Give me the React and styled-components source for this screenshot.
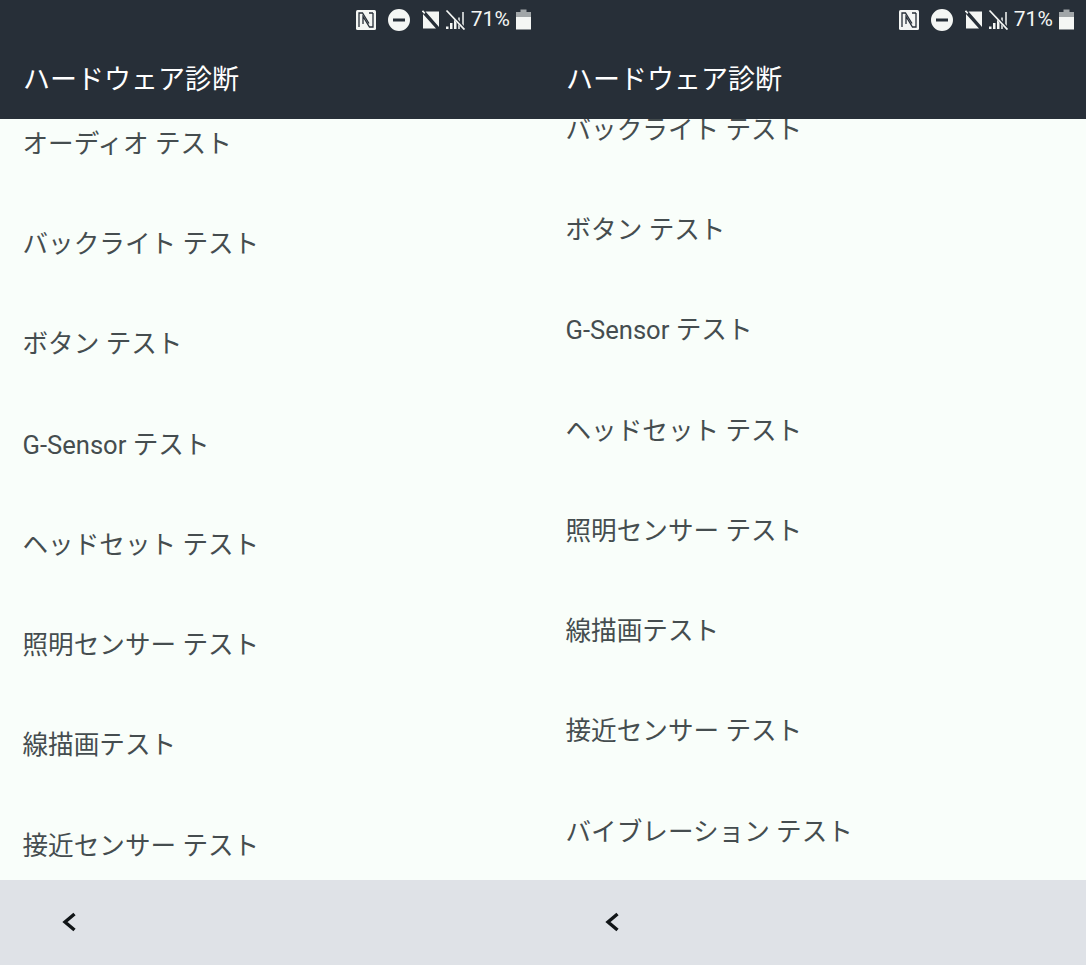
import styled, { createGlobalStyle } from 'styled-components';

const GlobalStyle = createGlobalStyle`
    html, body {
        margin: 0;
        padding: 0;
        background: #f9fefa;
    }
    body {
        font-family: Roboto, "Noto Sans CJK JP", sans-serif;
    }
`
const Page = styled.div`
    width: 1086px;
    height: 965px;
    display: grid;
    grid-template-columns: 543px 543px;
    overflow: hidden;
`
const Phone = styled.div`
    height: 965px;
    display: flex;
    flex-direction: column;
    background: #f9fefa;
`
const Header = styled.header`
    height: 119px;
    flex: none;
    background: #272f38;
    color: #fff;
    position: relative;
    z-index: 1;
`
const StatusBar = styled.div`
    height: 39px;
    padding-right: 12px;
    display: flex;
    align-items: center;
    justify-content: flex-end;
    color: #f4f6f4;
`
const Percent = styled.span`
    font-size: 21px;
    line-height: 1;
    margin: 0 6px 0 4px;
    letter-spacing: 0.1px;
`
const Title = styled.h1`
    margin: 0;
    padding-left: 23px;
    font-size: 27px;
    font-weight: 400;
    line-height: 82px;
`
const List = styled.div`
    flex: 1;
    min-height: 0;
    overflow: hidden;
`
const Rows = styled.div`
    margin-top: ${props => props.$offset}px;
`
const Row = styled.div`
    height: 100.3px;
    padding-left: 22.5px;
    display: flex;
    align-items: center;
    font-size: 25.6px;
    color: #454d4f;
`
const BottomBar = styled.nav`
    height: 85px;
    flex: none;
    box-sizing: border-box;
    background: #dfe2e7;
    padding: 0 0 1px 61px;
    display: flex;
    align-items: center;
    position: relative;
    z-index: 1;
`
const Icon = styled.svg`
    display: block;
    flex: none;
    margin-right: ${props => props.$gap || 0}px;
`

function NfcIcon() {
    return (
        <Icon $gap={12} width="20" height="20" viewBox="0 0 20 20">
            <rect width="20" height="20" rx="1.5" fill="currentColor" />
            <path fill="none" stroke="#272f38" strokeWidth="1.300" d="M3 17V3H6.500L13 13.500M17 3V17H13.500L7 6.500V14M13 3H17" />
        </Icon>
    );
}

function DndIcon() {
    return (
        <Icon $gap={12} width="22" height="22" viewBox="0 0 22 22">
            <path fill="currentColor" fillRule="evenodd" d="M11 0a11 11 0 1 0 0 22 11 11 0 0 0 0-22zM5 9.500h12v3H5z" />
        </Icon>
    );
}

function NoSimIcon() {
    return (
        <Icon $gap={4} width="18" height="20" viewBox="0 0 18 20">
            <path fill="currentColor" d="M3.500 1.500H17V17zM1 4 14 18.500H1z" />
            <path stroke="currentColor" strokeWidth="1.600" d="M0.500 0.800 2.800 3.400" />
        </Icon>
    );
}

function NoSignalIcon() {
    return (
        <Icon $gap={0} width="23" height="21" viewBox="0 0 23 21">
            <path fill="currentColor" d="M2 20h2.500v-2.500H2zM6 20h2.500v-6H6zM10 20h2.500v-9H10z" />
            <path fill="none" stroke="currentColor" strokeWidth="1.500" d="M15 20V8.500M19 20V3" />
            <path stroke="#272f38" strokeWidth="3" d="M5 3 22 21.500" />
            <path stroke="currentColor" strokeWidth="1.800" d="M2.500 1.500 20.500 20.500" />
        </Icon>
    );
}

function BatteryIcon() {
    return (
        <Icon width="15" height="21" viewBox="0 0 15 21">
            <path fill="currentColor" opacity="0.6" d="M4.500 0.500h6V3H15V8H0V3H4.500z" />
            <path fill="currentColor" d="M0 8h15v12.500H0z" />
        </Icon>
    );
}

function BackIcon() {
    return (
        <Icon width="16" height="20" viewBox="0 0 16 20">
            <path fill="none" stroke="#111518" strokeWidth="3.400" d="M13.500 2 4 10 13.500 18" />
        </Icon>
    );
}

const tests = [
    'オーディオ テスト',
    'バックライト テスト',
    'ボタン テスト',
    'G-Sensor テスト',
    'ヘッドセット テスト',
    '照明センサー テスト',
    '線描画テスト',
    '接近センサー テスト',
    'バイブレーション テスト',
];

function Screen({ items, offset }) {
    return (
        <Phone>
            <Header>
                <StatusBar>
                    <NfcIcon />
                    <DndIcon />
                    <NoSimIcon />
                    <NoSignalIcon />
                    <Percent>71%</Percent>
                    <BatteryIcon />
                </StatusBar>
                <Title>ハードウェア診断</Title>
            </Header>
            <List>
                <Rows $offset={offset}>
                    {items.map(item => <Row key={item}>{item}</Row>)}
                </Rows>
            </List>
            <BottomBar>
                <BackIcon />
            </BottomBar>
        </Phone>
    );
}

export default function App() {
    return (
        <>
            <GlobalStyle />
            <Page>
                <Screen items={tests.slice(0, 8)} offset={-28} />
                <Screen items={tests.slice(1)} offset={-42} />
            </Page>
        </>
    );
}
